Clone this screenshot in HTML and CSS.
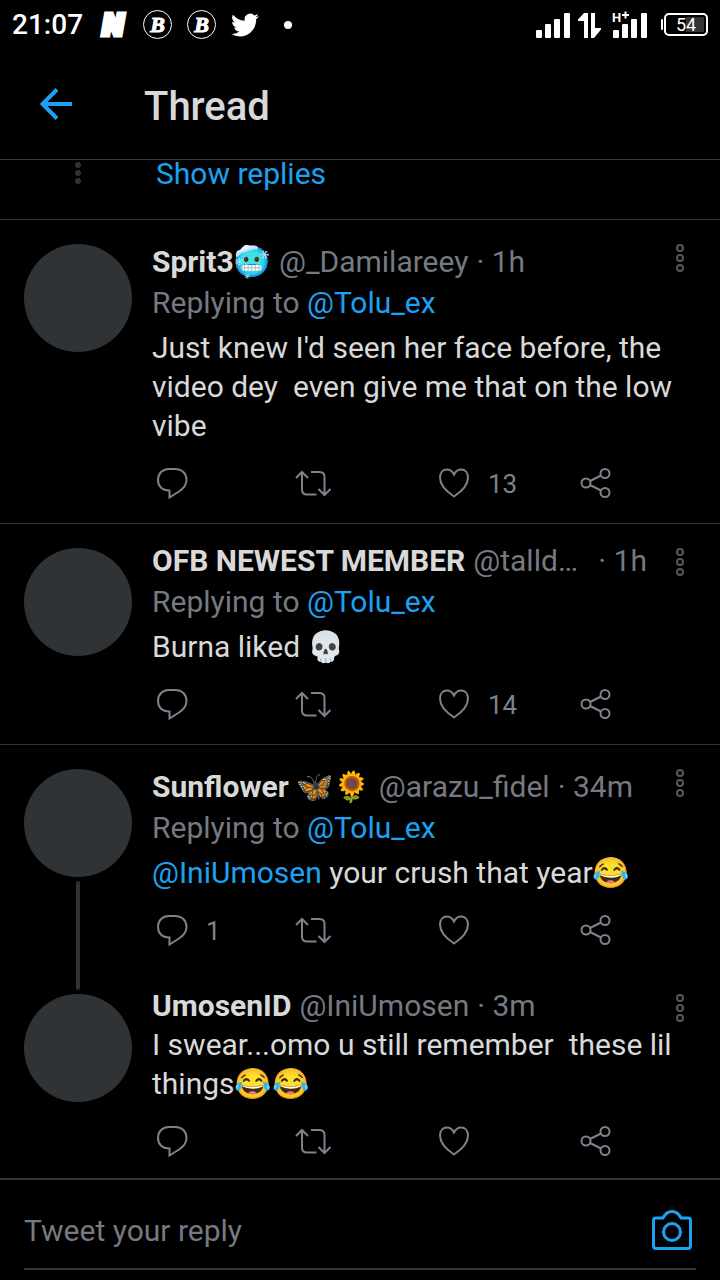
FILE: index.html
```html
<!DOCTYPE html>
<html lang="en">
<head>
  <meta charset="UTF-8">
  <meta name="viewport" content="width=device-width, initial-scale=1">
  <title>Thread</title>
  <link rel="stylesheet" href="styles.css">
</head>
<body>
  <!-- shared icons -->
  <svg class="sprite" aria-hidden="true">
    <symbol id="icon-reply" viewBox="0 0 40 36">
      <path d="M17 4h6c7 0 11.500 4.500 11.500 11 0 5-3 8.500-7.500 11.500L17.500 32.500V25.500C10 25.500 6 21 6 15 6 8.500 10.500 4 17 4z"/>
    </symbol>
    <symbol id="icon-retweet" viewBox="0 0 40 36">
      <path d="M3 13l6-6 6 6M9 8v16.500q0 5 5 5h9.500M18 7h8.500q5 0 5 5v17M25.500 24l6 6 6-6"/>
    </symbol>
    <symbol id="icon-like" viewBox="0 0 40 36">
      <path d="M20 31.500C14 27.500 6 20.500 6 12.500 6 7.500 9 4.500 13 4.500c3.500 0 5.500 2 7 5 1.500-3 3.500-5 7-5 4 0 7 3 7 8 0 8-8 15-14 19z"/>
    </symbol>
    <symbol id="icon-share" viewBox="0 0 40 36">
      <circle cx="11" cy="18" r="4.500"/>
      <circle cx="30" cy="8.500" r="4.500"/>
      <circle cx="30" cy="27.500" r="4.500"/>
      <path d="M15 16l11-5.500M15 20l11 5.500"/>
    </symbol>
    <symbol id="icon-more" viewBox="0 0 16 30">
      <circle cx="8" cy="5" r="3"/>
      <circle cx="8" cy="15" r="3"/>
      <circle cx="8" cy="25" r="3"/>
    </symbol>
  </svg>

  <div class="status-bar">
    <div class="status-left">
      <span class="clock">21:07</span>
      <span class="logo-n">N</span>
      <span class="logo-b">B</span>
      <span class="logo-b">B</span>
      <svg class="bird" viewBox="0 0 24 24" aria-hidden="true"><path d="M23.950 4.570a10 10 0 0 1-2.820.780 4.960 4.960 0 0 0 2.160-2.730c-.950.560-2 .960-3.130 1.190a4.920 4.920 0 0 0-8.380 4.480C7.690 8.100 4.070 6.130 1.640 3.160a4.920 4.920 0 0 0 1.520 6.570 4.900 4.900 0 0 1-2.230-.610v.060c0 2.380 1.700 4.370 3.950 4.820a5 5 0 0 1-2.210.090 4.940 4.940 0 0 0 4.600 3.420A9.870 9.870 0 0 1 0 19.540a13.990 13.990 0 0 0 7.550 2.210c9.050 0 14-7.500 14-13.980 0-.210 0-.420-.020-.630a9.940 9.940 0 0 0 2.460-2.550z"/></svg>
      <span class="dot"></span>
    </div>
    <div class="status-right">
      <svg width="112" height="30" viewBox="0 0 112 30" aria-hidden="true">
        <g fill="#fff">
          <rect x="0" y="20" width="6" height="8" rx="1"/>
          <rect x="9" y="14" width="6" height="14" rx="1"/>
          <rect x="18" y="9" width="6" height="19" rx="1"/>
          <rect x="28" y="3" width="6" height="25" rx="1"/>
          <path d="M48 3h4v25h-4V11h-6V9.500zM55 3h4v15h6v1.500L58 28h-3z"/>
          <rect x="77" y="20" width="6" height="8" rx="1"/>
          <rect x="86" y="14" width="6" height="14" rx="1"/>
          <rect x="95" y="9" width="6" height="19" rx="1"/>
          <rect x="105" y="3" width="6" height="25" rx="1"/>
        </g>
        <text class="network" x="76" y="12">H</text>
        <path d="M86 5h7M89.500 1.500v7" stroke="#fff" stroke-width="2"/>
      </svg>
      <span class="battery">54</span>
    </div>
  </div>

  <header class="app-bar">
    <a class="back" href="#" aria-label="Back">
      <svg width="32" height="32" viewBox="0 0 32 32"><path d="M32 16H3M17 1.500L2.500 16 17 30.500"/></svg>
    </a>
    <h1>Thread</h1>
  </header>

  <main class="thread">
    <div class="show-replies">
      <div class="thread-dots"><span></span><span></span><span></span></div>
      <a href="#">Show replies</a>
    </div>

    <article class="tweet">
      <div class="side"><div class="avatar"></div></div>
      <div class="content">
        <div class="meta has-emoji">
          <span class="name">Sprit3🥶</span>
          <span class="handle">@_Damilareey</span>
          <span class="time">· 1h</span>
        </div>
        <p class="replying">Replying to <a href="#">@Tolu_ex</a></p>
        <p class="text">Just knew I'd seen her face before, the video dey  even give me that on the low vibe</p>
        <div class="actions">
          <button aria-label="Reply"><svg><use href="#icon-reply"/></svg></button>
          <button aria-label="Retweet"><svg><use href="#icon-retweet"/></svg></button>
          <button aria-label="Like"><svg><use href="#icon-like"/></svg><span>13</span></button>
          <button aria-label="Share"><svg><use href="#icon-share"/></svg></button>
        </div>
      </div>
      <button class="more" aria-label="More"><svg><use href="#icon-more"/></svg></button>
    </article>

    <article class="tweet">
      <div class="side"><div class="avatar"></div></div>
      <div class="content">
        <div class="meta is-long">
          <span class="name">OFB NEWEST MEMBER</span>
          <span class="handle">@talld…</span>
          <span class="time">· 1h</span>
        </div>
        <p class="replying">Replying to <a href="#">@Tolu_ex</a></p>
        <p class="text">Burna liked 💀</p>
        <div class="actions">
          <button aria-label="Reply"><svg><use href="#icon-reply"/></svg></button>
          <button aria-label="Retweet"><svg><use href="#icon-retweet"/></svg></button>
          <button aria-label="Like"><svg><use href="#icon-like"/></svg><span>14</span></button>
          <button aria-label="Share"><svg><use href="#icon-share"/></svg></button>
        </div>
      </div>
      <button class="more" aria-label="More"><svg><use href="#icon-more"/></svg></button>
    </article>

    <article class="tweet linked">
      <div class="side"><div class="avatar"></div><div class="line"></div></div>
      <div class="content">
        <div class="meta has-emoji">
          <span class="name">Sunflower 🦋🌻</span>
          <span class="handle">@arazu_fidel</span>
          <span class="time">· 34m</span>
        </div>
        <p class="replying">Replying to <a href="#">@Tolu_ex</a></p>
        <p class="text"><a href="#">@IniUmosen</a> your crush that year😂</p>
        <div class="actions">
          <button aria-label="Reply"><svg><use href="#icon-reply"/></svg><span>1</span></button>
          <button aria-label="Retweet"><svg><use href="#icon-retweet"/></svg></button>
          <button aria-label="Like"><svg><use href="#icon-like"/></svg></button>
          <button aria-label="Share"><svg><use href="#icon-share"/></svg></button>
        </div>
      </div>
      <button class="more" aria-label="More"><svg><use href="#icon-more"/></svg></button>
    </article>

    <article class="tweet last">
      <div class="side"><div class="avatar"></div></div>
      <div class="content">
        <div class="meta">
          <span class="name">UmosenID</span>
          <span class="handle">@IniUmosen</span>
          <span class="time">· 3m</span>
        </div>
        <p class="text">I swear...omo u still remember  these lil things😂😂</p>
        <div class="actions">
          <button aria-label="Reply"><svg><use href="#icon-reply"/></svg></button>
          <button aria-label="Retweet"><svg><use href="#icon-retweet"/></svg></button>
          <button aria-label="Like"><svg><use href="#icon-like"/></svg></button>
          <button aria-label="Share"><svg><use href="#icon-share"/></svg></button>
        </div>
      </div>
      <button class="more" aria-label="More"><svg><use href="#icon-more"/></svg></button>
    </article>
  </main>

  <form class="composer">
    <div class="field">
      <input type="text" placeholder="Tweet your reply" aria-label="Tweet your reply">
      <button type="button" class="camera" aria-label="Add photo">
        <svg width="40" height="40" viewBox="0 0 40 40"><path d="M4 8h7C13 4 16 1.500 20 1.500S27 4 29 8h7q2.500 0 2.500 2.500v25.500q0 2.500-2.500 2.500H4q-2.500 0-2.500-2.500V10.500Q1.500 8 4 8z"/><circle cx="20" cy="22" r="8.500"/></svg>
      </button>
    </div>
  </form>
</body>
</html>
```

FILE: styles.css
```css
* {
  margin: 0;
  padding: 0;
  box-sizing: border-box;
}

body {
  font-family: Roboto, "Noto Color Emoji", sans-serif;
  font-size: 30px;
  line-height: 39px;
  background: #000;
  color: #d9d9d9;
  min-height: 100vh;
  display: flex;
  flex-direction: column;
}

a {
  color: #1da1f2;
  text-decoration: none;
}

button {
  background: none;
  border: none;
  font: inherit;
  color: inherit;
  cursor: pointer;
}

svg {
  display: block;
}

.sprite {
  position: absolute;
  width: 0;
  height: 0;
}

/* status bar */
.status-bar {
  display: flex;
  justify-content: space-between;
  align-items: center;
  height: 49px;
  padding: 0 12px;
  color: #fff;
}

.status-left,
.status-right {
  display: flex;
  align-items: center;
}

.status-left {
  gap: 15px;
}

.clock {
  font-size: 28px;
  font-weight: 500;
}

.logo-n {
  width: 30px;
  font-size: 30px;
  font-weight: 900;
  font-style: italic;
  text-align: center;
  -webkit-text-stroke: 5px #fff;
}

.logo-b {
  width: 29px;
  height: 29px;
  border: 1px solid #fff;
  border-radius: 50%;
  font-family: "Liberation Serif", serif;
  font-size: 22px;
  font-weight: bold;
  font-style: italic;
  line-height: 27px;
  text-align: center;
  -webkit-text-stroke: 1px #fff;
}

.bird {
  width: 28px;
  height: 28px;
  fill: #fff;
}

.dot {
  width: 8px;
  height: 8px;
  margin-left: 10px;
  border-radius: 50%;
  background: #fff;
}

.status-right {
  gap: 16px;
}

.network {
  font-size: 13px;
  font-weight: 700;
  fill: #fff;
}

.battery {
  position: relative;
  width: 44px;
  height: 23px;
  border: 2px solid #fff;
  border-radius: 5px;
  background: linear-gradient(90deg, #000 50%, #333 50%) content-box;
  padding: 2px;
  font-size: 18px;
  line-height: 16px;
  text-align: center;
}

.battery::before {
  content: "";
  position: absolute;
  left: -5px;
  top: 4px;
  width: 2px;
  height: 11px;
  border-radius: 2px;
  background: #fff;
}

/* app bar */
.app-bar {
  display: flex;
  align-items: center;
  gap: 72px;
  height: 111px;
  padding: 0 40px;
  border-bottom: 1px solid #38383a;
}

.app-bar h1 {
  padding-top: 4px;
  font-size: 40px;
  font-weight: 500;
}

.back svg {
  fill: none;
  stroke: #1da1f2;
  stroke-width: 4;
}

/* thread */
.thread {
  flex-grow: 1;
}

.show-replies {
  display: flex;
  height: 60px;
  padding: 0 24px;
  line-height: 28px;
  border-bottom: 1px solid #2f3336;
}

.thread-dots {
  display: flex;
  flex-direction: column;
  align-items: center;
  gap: 2px;
  width: 108px;
  margin-right: 24px;
  padding-top: 2px;
}

.thread-dots span {
  width: 6px;
  height: 6px;
  border-radius: 50%;
  background: #2f3336;
}

.tweet {
  position: relative;
  display: flex;
  gap: 20px;
  padding: 0 24px;
  border-bottom: 1px solid #2f3336;
}

.tweet.linked,
.tweet.last {
  border-bottom: none;
}

.side {
  display: flex;
  flex-direction: column;
  align-items: center;
  padding-top: 24px;
}

.avatar {
  width: 108px;
  height: 108px;
  border-radius: 50%;
  background: #2f3336;
}

.line {
  flex-grow: 1;
  width: 4px;
  margin: 4px 0 -20px;
  border-radius: 2px;
  background: #2f3336;
}

.content {
  flex: 1;
  min-width: 0;
  padding: 18px 0 22px;
}

.last .content {
  padding: 17px 0 19px;
}

.meta {
  display: flex;
  gap: 8px;
  line-height: 38px;
  padding-right: 49px;
  white-space: nowrap;
}

.meta.has-emoji {
  padding-top: 5px;
}

.name {
  font-weight: 700;
}

.handle,
.time,
.replying {
  color: #757a82;
}

.is-long .handle {
  flex: 1;
  overflow: hidden;
  text-overflow: ellipsis;
}

.replying {
  margin-top: 2px;
}

.text {
  white-space: pre-wrap;
}

.replying + .text {
  margin-top: 6px;
}

.actions {
  display: grid;
  grid-template-columns: repeat(3, 1fr) 40px;
  margin-top: 20px;
  padding-right: 81px;
  color: #7b838c;
}

.actions button {
  display: flex;
  align-items: center;
  gap: 14px;
  height: 36px;
  font-size: 26px;
}

.actions span {
  padding-top: 2px;
}

.actions svg {
  width: 40px;
  height: 36px;
  fill: none;
  stroke: currentColor;
  stroke-width: 2;
}

.more {
  position: absolute;
  top: 23px;
  right: 32px;
}

.more svg {
  width: 16px;
  height: 30px;
  fill: none;
  stroke: #55595d;
  stroke-width: 2;
}

/* reply box */
.composer {
  padding: 0 24px 10px;
  border-top: 2px solid #2f3336;
}

.field {
  display: flex;
  align-items: center;
  height: 90px;
  padding: 12px 4px 0 0;
  border-bottom: 2px solid #2f3336;
}

.field input {
  flex: 1;
  min-width: 0;
  height: 48px;
  background: none;
  border: none;
  outline: none;
  font: inherit;
  color: #d9d9d9;
}

.field input::placeholder {
  color: #757a82;
}

.camera svg {
  fill: none;
  stroke: #1da1f2;
  stroke-width: 3;
}
```
